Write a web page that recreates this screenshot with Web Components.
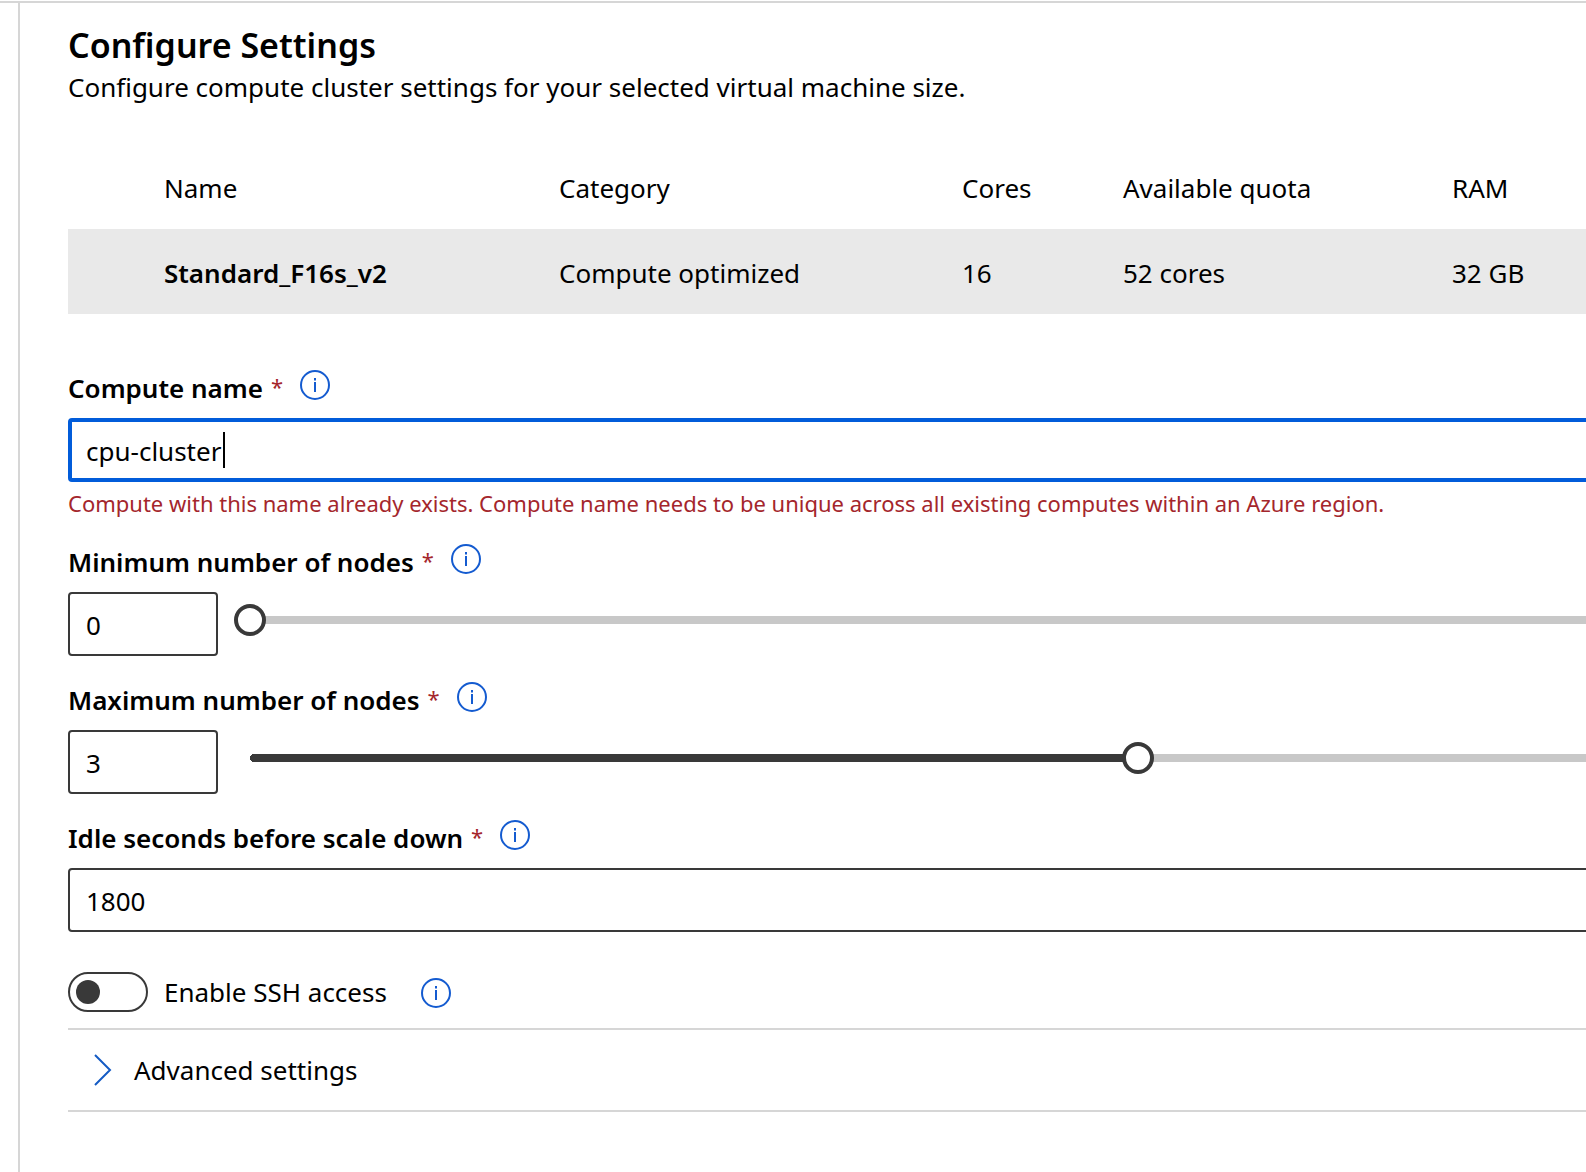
<!DOCTYPE html>
<html lang="en">
<head>
<meta charset="utf-8">
<meta name="viewport" content="width=device-width, initial-scale=1">
<title>Configure Settings</title>
<style>
  html, body { margin: 0; min-height: 100%; background: #fff; }
  body {
    --ink: #000;
    --line: #d6d6d6;
    --outline: #393939;
    --accent: #015cda;
    --error: #a4262c;
    font: 400 26px/40px "Noto Sans", "Open Sans", sans-serif;
    color: var(--ink);
  }
</style>
</head>
<body>
<settings-panel>
  <settings-header heading="Configure Settings">Configure compute cluster settings for your selected virtual machine size.</settings-header>
  <vm-size-table></vm-size-table>
  <settings-form>
    <text-field label="Compute name" value="cpu-cluster" active error="Compute with this name already exists. Compute name needs to be unique across all existing computes within an Azure region."></text-field>
    <node-slider label="Minimum number of nodes" value="0" max="6"></node-slider>
    <node-slider label="Maximum number of nodes" value="3" max="6"></node-slider>
    <text-field label="Idle seconds before scale down" value="1800"></text-field>
  </settings-form>
  <toggle-switch>Enable SSH access</toggle-switch>
  <expand-section>Advanced settings</expand-section>
</settings-panel>

<script>
  const define = (name, render, connected) => customElements.define(name, class extends HTMLElement {
    connectedCallback() {
      if (this.shadowRoot) return;
      this.attachShadow({ mode: "open" }).innerHTML = render(this);
      if (connected) connected(this);
    }
  });
  const attr = (el, name) => el.getAttribute(name) || "";
  const fieldStyles = `
    * { box-sizing: border-box; }
    .caption { display: flex; align-items: flex-start; height: 40px; margin-bottom: 10px; }
    label { font-weight: 600; }
    .star { color: var(--error); font-size: 22px; line-height: 36px; margin-left: 8px; }
    info-button { margin: 2px 0 0 17px; }
    input:not([type=range]) {
      display: block; height: 64px; margin: 0; padding: 2px 16px 0;
      border: 2px solid var(--outline); border-radius: 4px; background: #fff;
      font: inherit; color: inherit; outline: none;
    }`;
  const caption = el => `<div class="caption"><label for="value">${attr(el, "label")}</label><span class="star" aria-hidden="true">*</span><info-button about="${attr(el, "label")}"></info-button></div>`;

  define("settings-panel", () => `<style>
    :host { display: block; padding-top: 1px; overflow: clip; }
    .frame { display: flex; min-height: calc(100vh - 1px); padding-left: 18px; border-top: 2px solid var(--line); box-sizing: border-box; }
    main { flex: 1; min-width: 0; padding: 18px 0 40px 48px; border-left: 2px solid var(--line); overflow: clip; }
    /* The form is wider than the viewport and runs on past its right edge. */
    .content { width: 130%; }
    </style><div class="frame"><main><div class="content"><slot></slot></div></main></div>`);

  define("settings-header", el => `<style>
    :host { display: block; margin-bottom: 40px; }
    h1 { margin: 0; font-size: 34px; line-height: 48px; font-weight: 600; }
    p { margin: 0; line-height: 36px; }
    </style><h1>${attr(el, "heading")}</h1><p><slot></slot></p>`);

  define("vm-size-table", () => `<style>
    :host { display: block; margin-bottom: 54px; }
    table { width: 100%; table-layout: fixed; border-collapse: collapse; text-align: left; }
    th, td { padding: 2px 0 0; font-weight: 400; }
    thead tr { height: 84px; }
    tbody tr { height: 85px; background: #e9e9e9; }
    tbody th { font-weight: 600; }
    .select { width: 96px; } .name { width: 395px; } .category { width: 403px; }
    .cores { width: 161px; } .quota { width: 329px; }
    </style>
    <table>
      <colgroup><col class="select"><col class="name"><col class="category"><col class="cores"><col class="quota"><col></colgroup>
      <thead><tr><td></td><th scope="col">Name</th><th scope="col">Category</th><th scope="col">Cores</th><th scope="col">Available quota</th><th scope="col">RAM</th></tr></thead>
      <tbody><tr><td></td><th scope="row">Standard_F16s_v2</th><td>Compute optimized</td><td>16</td><td>52 cores</td><td>32 GB</td></tr></tbody>
    </table>`);

  define("settings-form", () => `<style>
    :host { display: flex; flex-direction: column; gap: 24px; margin-bottom: 40px; }
    </style><slot></slot>`);

  define("info-button", el => `<style>
    :host { display: block; width: 30px; height: 30px; }
    button { display: block; width: 30px; height: 30px; margin: 0; padding: 0; border: 0; background: none; color: #145bd0; }
    svg { display: block; }
    </style>
    <button type="button" aria-label="About ${attr(el, "about")}"><svg width="30" height="30" viewBox="0 0 30 30" fill="none" stroke="currentColor" stroke-width="2"><circle cx="15" cy="15" r="14"/><path d="M15 12v10M15 8v2.5"/></svg></button>`);

  define("text-field", el => `<style>
    :host { display: block; }
    ${fieldStyles}
    .box { position: relative; }
    .box input { width: 100%; }
    .box.active input { border: 4px solid var(--accent); padding: 2px 14px 0; }
    .caret { position: absolute; top: 14px; left: 155px; width: 2px; height: 36px; background: #000; }
    .error { margin: 6px 0 0; font-size: 22px; line-height: 30px; color: var(--error); }
    </style>${caption(el)}
    <div class="box${el.hasAttribute("active") ? " active" : ""}">
      <input id="value" type="text" value="${attr(el, "value")}" required>
      ${el.hasAttribute("active") ? '<span class="caret"></span>' : ""}
    </div>
    ${attr(el, "error") ? `<p class="error" role="alert">${attr(el, "error")}</p>` : ""}`);

  define("node-slider", el => `<style>
    :host { display: block; }
    ${fieldStyles}
    .row { display: flex; gap: 16px; }
    #value { flex: none; width: 150px; }
    [type=range] {
      appearance: none; flex: 1; min-width: 0; height: 56px; margin: 0; background: none;
      --fill: calc(16px + (100% - 32px) * var(--ratio));
    }
    [type=range]::-webkit-slider-runnable-track {
      height: 32px;
      background:
        radial-gradient(circle at 20px 50%, var(--cap) 4px, transparent 4px) no-repeat,
        linear-gradient(to right, transparent 20px, #393939 20px, #393939 var(--fill), #c8c8c8 var(--fill)) center / 100% 8px no-repeat;
    }
    [type=range]::-webkit-slider-thumb {
      appearance: none; width: 32px; height: 32px; box-sizing: border-box;
      border: 4px solid var(--outline); border-radius: 50%; background: #fff;
    }
    </style>${caption(el)}
    <div class="row">
      <input id="value" type="text" inputmode="numeric" value="${attr(el, "value")}" required>
      <input type="range" min="0" max="${attr(el, "max")}" value="${attr(el, "value")}" aria-label="${attr(el, "label")}">
    </div>`, el => {
    const box = el.shadowRoot.querySelector("#value");
    const range = el.shadowRoot.querySelector("[type=range]");
    const paint = () => {
      range.style.setProperty("--ratio", range.value / range.max);
      range.style.setProperty("--cap", range.value > 0 ? "#393939" : "#c8c8c8");
    };
    range.addEventListener("input", () => { box.value = range.value; paint(); });
    box.addEventListener("change", () => { range.value = box.value; paint(); });
    paint();
  });

  define("toggle-switch", () => `<style>
    :host { display: flex; align-items: center; height: 40px; margin-bottom: 16px; }
    input {
      appearance: none; box-sizing: border-box; width: 80px; height: 40px; margin: 0 16px 0 0; padding: 6px;
      display: flex; border: 2px solid var(--outline); border-radius: 20px;
    }
    input::before { content: ""; width: 24px; height: 24px; border-radius: 50%; background: var(--outline); }
    input:checked { justify-content: flex-end; }
    info-button { margin: 2px 0 0 34px; }
    </style><input id="toggle" type="checkbox" role="switch"><label for="toggle"><slot></slot></label><info-button about="SSH access"></info-button>`);

  define("expand-section", () => `<style>
    :host { display: block; border: solid var(--line); border-width: 2px 0; }
    button {
      display: flex; align-items: center; gap: 22px; width: 100%; height: 80px; margin: 0; padding: 0 24px;
      border: 0; background: none; font: inherit; color: inherit; text-align: left;
    }
    svg { flex: none; color: #145bc4; }
    </style>
    <button type="button" aria-expanded="false"><svg width="20" height="34" viewBox="0 0 20 34" fill="none" stroke="currentColor" stroke-width="2"><path d="M3 2l15 15L3 32"/></svg><span><slot></slot></span></button>`);
</script>
</body>
</html>
